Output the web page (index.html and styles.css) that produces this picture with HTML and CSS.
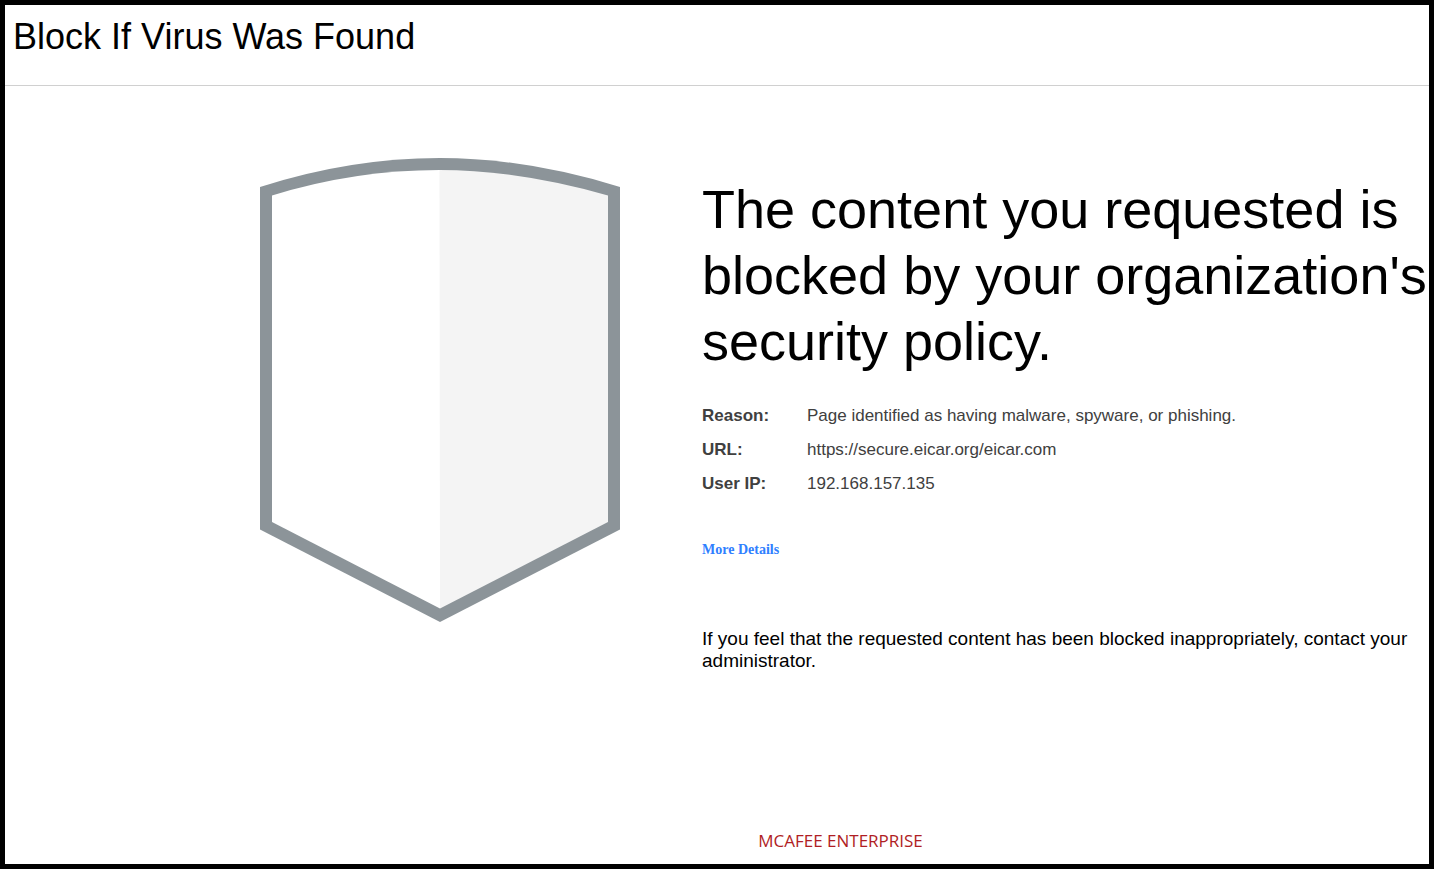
FILE: index.html
```html
<!DOCTYPE html>
<html lang="en">
<head>
<meta charset="utf-8">
<title>Block If Virus Was Found</title>
<link rel="stylesheet" href="styles.css">
</head>
<body class="page">
<header class="header">
  <h1 class="header-title">Block If Virus Was Found</h1>
</header>
<main class="main">
  <svg class="shield" viewBox="0 0 360 464" aria-hidden="true">
    <path fill="#8c9499" d="M0 29 Q90 0 180 0 Q266 0 360 29 V371.500 L180 464 L0 371.500Z"/>
    <path fill="#fff" d="M12 37.500 Q94 12 180 12 V450.500 L12 364Z"/>
    <path fill="#f4f4f4" d="M179.500 12 Q258 12 348 37.500 V364 L180 450.500Z"/>
  </svg>
  <section class="message">
    <h2 class="message-title">The content you requested is blocked by your organization's security policy.</h2>
    <dl class="details">
      <dt class="details-label">Reason:</dt>
      <dd class="details-value">Page identified as having malware, spyware, or phishing.</dd>
      <dt class="details-label">URL:</dt>
      <dd class="details-value">https://secure.eicar.org/eicar.com</dd>
      <dt class="details-label">User IP:</dt>
      <dd class="details-value">192.168.157.135</dd>
    </dl>
    <a class="more" href="#">More Details</a>
    <p class="contact">If you feel that the requested content has been blocked inappropriately, contact your administrator.</p>
  </section>
</main>
<footer class="footer">MCAFEE ENTERPRISE</footer>
</body>
</html>
```
FILE: styles.css
```css
* {
  box-sizing: border-box;
}

.page {
  display: flex;
  flex-direction: column;
  min-height: 100vh;
  margin: 0;
  border: 5px solid #000;
  background: #fff;
  color: #000;
  font-family: "Liberation Sans", Arial, sans-serif;
}

.header {
  padding: 11px 8px 27px;
  border-bottom: 1px solid #d0d0d0;
}

.header-title {
  margin: 0;
  font-size: 36px;
  font-weight: 400;
  line-height: 42px;
}

.main {
  display: grid;
  flex: 1;
  grid-template-columns: minmax(0, 697fr) minmax(0, 727fr);
  align-items: start;
  padding-top: 72px;
}

.shield {
  justify-self: end;
  width: 360px;
  max-width: 100%;
  margin-right: 82px;
}

.message {
  padding-top: 18px;
}

.message-title {
  margin: 0;
  font-size: 54px;
  font-weight: 400;
  line-height: 66px;
}

.details {
  display: grid;
  grid-template-columns: 105px 1fr;
  row-gap: 14px;
  margin: 32px 0 0;
  color: #404040;
  font-size: 17px;
  line-height: 20px;
}

.details-label {
  font-weight: 700;
}

.details-value {
  margin: 0;
}

.more {
  display: inline-block;
  margin-top: 47px;
  color: #2f80ff;
  font-family: "Liberation Serif", "Times New Roman", serif;
  font-size: 14px;
  font-weight: 700;
  line-height: 18px;
  text-decoration: none;
}

.contact {
  margin: 69px 0 0;
  font-size: 19px;
  line-height: 22px;
}

.footer {
  padding: 0 0 11px 247px;
  color: #b01e24;
  font-family: "Open Sans", sans-serif;
  font-size: 17px;
  line-height: 24px;
  text-align: center;
}
```
